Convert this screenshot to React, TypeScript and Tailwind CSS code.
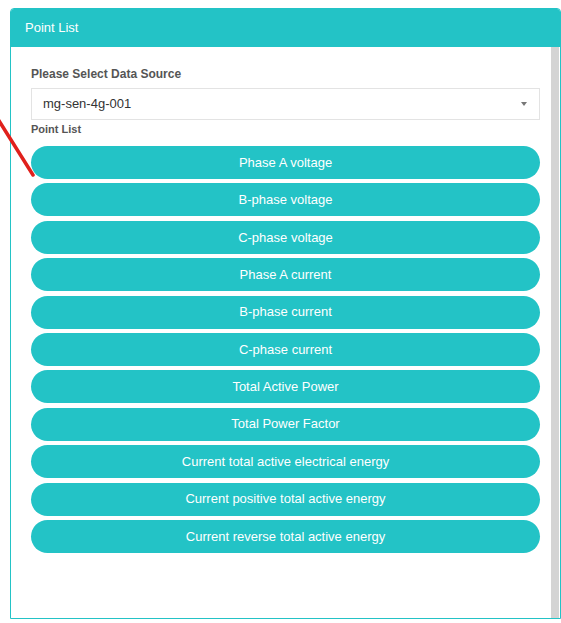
const POINTS = [
  "Phase A voltage",
  "B-phase voltage",
  "C-phase voltage",
  "Phase A current",
  "B-phase current",
  "C-phase current",
  "Total Active Power",
  "Total Power Factor",
  "Current total active electrical energy",
  "Current positive total active energy",
  "Current reverse total active energy",
];

export default function App() {
  return (
    <div className="relative w-[561px] h-[623px] bg-white pl-[10px] pt-[8px] font-['Liberation_Sans',Arial,sans-serif]">
      <div className="w-[551px] h-[611px] border border-[#23c3c6] rounded-t-[4px] flex flex-col overflow-hidden">
        <div className="h-[38px] shrink-0 bg-[#23c3c6] flex items-center pl-[14px] text-white text-[13px]">
          Point List
        </div>
        <div className="flex flex-1 min-h-0">
          <div className="flex-1 pl-[20px] pr-[11px] pt-[19px]">
            <div className="text-[12px] leading-[17px] font-bold text-[#555]">Please Select Data Source</div>
            <div className="mt-[5px] h-[32px] border border-[#e3e3e3] flex items-center justify-between pl-[11px] pr-[12px] text-[13px] text-[#333]">
              <span>mg-sen-4g-001</span>
              <span className="w-0 h-0 border-l-[3px] border-r-[3px] border-t-[4px] border-l-transparent border-r-transparent border-t-[#777]" />
            </div>
            <div className="text-[11px] leading-[16px] font-bold text-[#555] mt-[1px]">Point List</div>
            <div className="mt-[9px] flex flex-col gap-[4.4px]">
              {POINTS.map((p) => (
                <button
                  key={p}
                  className="h-[33px] w-full rounded-full bg-[#23c3c6] text-white text-[13px] flex items-center justify-center"
                >
                  {p}
                </button>
              ))}
            </div>
          </div>
          <div className="w-[8px] bg-[#d4d4d4] mr-[1px]" />
        </div>
      </div>
      {/* red annotation stroke */}
      <svg className="absolute left-0 top-0 pointer-events-none" width="60" height="200">
        <line x1="-4" y1="116" x2="33" y2="175" stroke="#e0201c" strokeWidth="3.5" strokeLinecap="round" />
      </svg>
    </div>
  );
}
